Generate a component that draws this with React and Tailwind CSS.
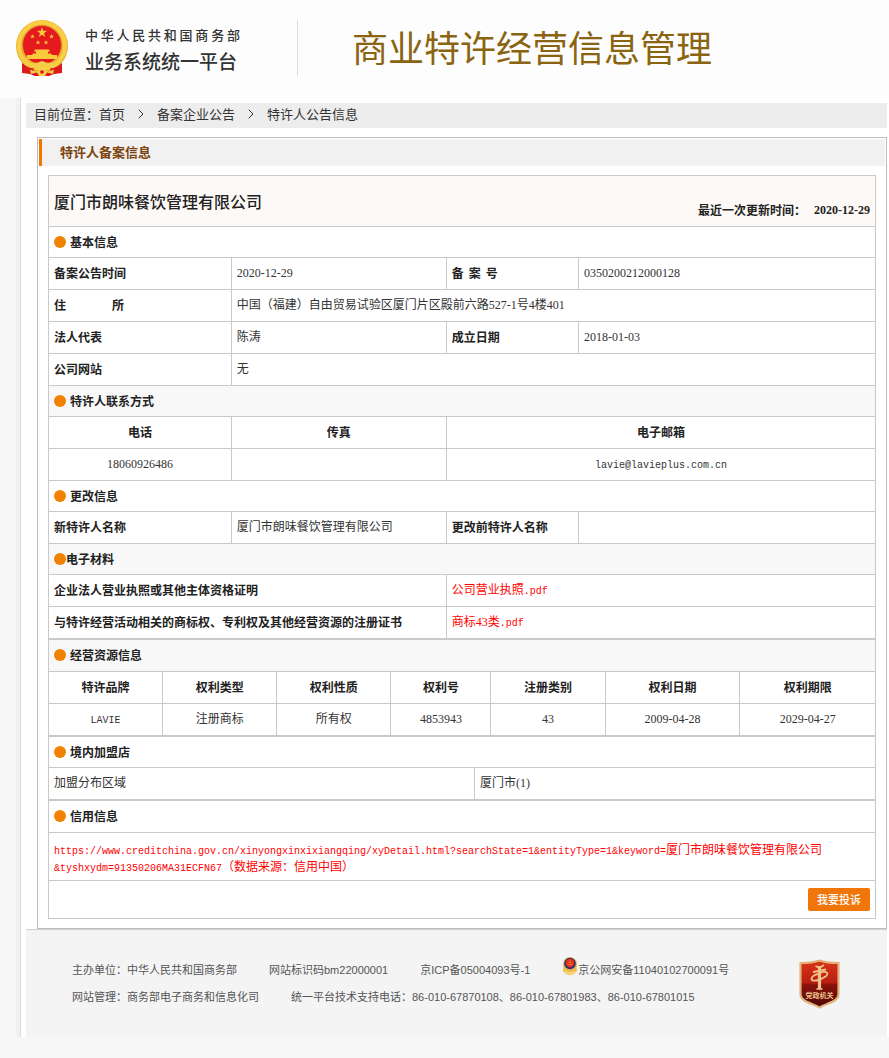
import React from "react";
import { ChevronRight } from "lucide-react";

const MONO = "font-['Liberation_Mono','Noto_Sans_CJK_SC',monospace] text-[10px] leading-none";
const CELL = "border border-[#c9c9c9] px-[5px] h-8 pt-0 pb-px";
const LABEL = CELL + " text-left font-bold text-[#222]";
const CENTER_LABEL = CELL + " text-center font-bold text-[#222]";
const VALUE =
  CELL + " text-[#333] font-['Liberation_Serif','Noto_Sans_CJK_SC',serif]";
const TABLE = "w-full table-fixed border-collapse text-[12px] leading-4";

function Emblem() {
  return (
    <svg viewBox="0 0 52 56" className="h-14 w-[52px] shrink-0" aria-hidden="true">
      <path d="M7 38 L6 53 L14 54 L19 56 L33 56 L38 54 L46 53 L45 38 Z" fill="#d8141c" />
      <circle cx="26" cy="26" r="26" fill="#eeb035" />
      <circle cx="26" cy="25.5" r="23" fill="none" stroke="#f7cf45" strokeWidth="4" />
      <circle cx="26" cy="25" r="19.500" fill="#e5191e" stroke="#d99a22" strokeWidth="0.800" />
      <g fill="#f8c93a">
        <path d="M26 7 L27.2 10.8 L31.2 10.8 L28 13.200 L29.200 17 L26 14.700 L22.800 17 L24 13.200 L20.800 10.800 L24.800 10.800 Z" />
        <path d="M16.500 14 l.6 1.700 h1.800 l-1.400 1.100 .5 1.700 -1.500 -1 -1.500 1 .5 -1.700 -1.400 -1.100 h1.800 Z" />
        <path d="M35.500 14 l.6 1.700 h1.800 l-1.400 1.100 .5 1.700 -1.500 -1 -1.500 1 .5 -1.700 -1.400 -1.100 h1.800 Z" />
        <path d="M22 20 l.6 1.700 h1.800 l-1.400 1.100 .5 1.700 -1.500 -1 -1.500 1 .5 -1.700 -1.400 -1.100 h1.800 Z" />
        <path d="M30 20 l.6 1.700 h1.800 l-1.400 1.100 .5 1.700 -1.500 -1 -1.500 1 .5 -1.700 -1.400 -1.100 h1.800 Z" />
        <path d="M19 29.500 H33 L34 31.500 H32 V33.500 H35 L36 35 H41 V39 H11 V35 H16 L17 33.500 H20 V31.500 H18 Z" />
      </g>
      <path d="M7 39 Q16 46 26 41 Q36 46 45 39 L43 44 Q34 50 26 46 Q18 50 9 44 Z" fill="#f6cd45" />
      <path d="M6 43 Q12 49 18 48 L16 53 L6 53 Z M46 43 Q40 49 34 48 L36 53 L46 53 Z" fill="#dd1a1c" />
      <path d="M14 49.500 Q20 53 26 49 Q32 53 38 49.500 L37 54 L31 52.500 L29 56 H23 L21 52.500 L15 54 Z" fill="#f6cd45" />
      <circle cx="26" cy="52" r="1.800" fill="#d8141c" />
    </svg>
  );
}

function PoliceBadge() {
  return (
    <svg viewBox="0 0 16 18" className="h-[18px] w-4 shrink-0" aria-hidden="true">
      <path d="M1.500 9 L1 14 Q4 18 8 18 Q12 18 15 14 L14.500 9 Z" fill="#f0bd4c" />
      <path d="M3 14.500 Q8 18 13 14.500" fill="none" stroke="#fbe08c" strokeWidth="1.500" />
      <circle cx="8" cy="7" r="7" fill="#e9b450" />
      <circle cx="8" cy="6.500" r="5.800" fill="#2f2f6e" />
      <circle cx="8" cy="6" r="4.200" fill="#e8301c" />
      <path d="M5.500 7.500 H10.500 M6.500 5.500 H9.500 M8 3 V4.500" stroke="#f07c30" strokeWidth="0.900" />
    </svg>
  );
}

function ShieldBadge() {
  return (
    <svg viewBox="0 0 41 50" className="h-[50px] w-[41px] shrink-0" role="img" aria-label="党政机关">
      <defs>
        <linearGradient id="shield" x1="0" y1="0" x2="0" y2="1">
          <stop offset="0" stopColor="#d93419" />
          <stop offset="0.480" stopColor="#b81e12" />
          <stop offset="0.500" stopColor="#8e130d" />
          <stop offset="1" stopColor="#4a0806" />
        </linearGradient>
      </defs>
      <path
        d="M20.500 1.500 C15 3.500 8 4 1.500 4 V35 C1.500 43 13 44 20.500 48.500 C28 44 39.500 43 39.500 35 V4 C33 4 26 3.500 20.500 1.500 Z"
        fill="url(#shield)"
        stroke="#e2b27c"
        strokeWidth="2.200"
      />
      <g fill="none" stroke="#efc48c">
        <path d="M20.500 7 V30" strokeWidth="3.200" />
        <path d="M16.500 7 L20.500 9 L25 6" strokeWidth="1.600" />
        <path d="M14 13 L27 10.500" strokeWidth="1.800" />
        <path d="M21 14 C27 11.500 31 14 26.500 17.500 C21 21.500 12 23.500 12.500 19.500 C12.700 17.500 16 15.500 19 15" strokeWidth="1.800" />
        <path d="M17.500 30 H23.500" strokeWidth="1.600" />
      </g>
      <text
        x="20.500"
        y="39"
        textAnchor="middle"
        fontSize="7"
        fontWeight="700"
        fill="#efc48c"
        fontFamily="'Noto Sans CJK SC', sans-serif"
      >
        党政机关
      </text>
    </svg>
  );
}

function Section({ title, span = 1, shaded = false, tight = false, height = "h-[31px]" }) {
  return (
    <tr className={shaded ? "bg-[#f8f8f8]" : "bg-white"}>
      <th
        colSpan={span}
        className={height + " border border-[#c9c9c9] px-[5px] pb-px pt-0 text-left font-bold text-[#222]"}
      >
        <span className={tight ? "flex items-center" : "flex items-center gap-1"}>
          <span className="size-3 rounded-full bg-[#f08200]" />
          <span>{title}</span>
        </span>
      </th>
    </tr>
  );
}

function Spread({ text }) {
  return (
    <span className="flex justify-between">
      {[...text].map((c, i) => (
        <span key={i}>{c}</span>
      ))}
    </span>
  );
}

function Header() {
  return (
    <header className="flex h-[98px] items-center bg-[#fdfdfd] pb-[2px] pl-4">
      <Emblem />
      <div className="ml-[17px] w-[155px] shrink-0 pt-1 text-[#333]">
        <div className="text-[13px] font-medium leading-5">
          <Spread text="中华人民共和国商务部" />
        </div>
        <div className="mt-[2px] whitespace-nowrap text-[19px] font-medium leading-7">业务系统统一平台</div>
      </div>
      <div className="ml-[57px] h-14 w-px shrink-0 bg-[#dcdcdc]" />
      <h1 className="ml-[54px] whitespace-nowrap pb-1 text-[36px] leading-[44px] text-[#8a6410]">商业特许经营信息管理</h1>
    </header>
  );
}

function Breadcrumb() {
  return (
    <nav className="flex h-[25px] items-center gap-2 bg-[#ededed] pb-[3px] pl-2 text-[13px] text-[#333]">
      <span>
        目前位置：<a href="#home">首页</a>
      </span>
      <ChevronRight size={16} strokeWidth={1.5} />
      <a href="#notices">备案企业公告</a>
      <ChevronRight size={16} strokeWidth={1.5} />
      <a href="#detail">特许人公告信息</a>
    </nav>
  );
}

function MainTable() {
  return (
    <table className={TABLE}>
      <colgroup>
        <col className="w-[22.1%]" />
        <col className="w-[26%]" />
        <col className="w-[16%]" />
        <col />
      </colgroup>
      <tbody>
        <tr className="bg-[#fdf9f6]">
          <td colSpan={4} className="h-[51px] border border-[#c9c9c9] px-[5px] pb-px pt-0">
            <div className="flex items-center justify-between">
              <h3 className="text-[16px] font-medium leading-6 text-[#222]">厦门市朗味餐饮管理有限公司</h3>
              <div className="flex gap-2 pt-[18px] font-bold text-[#222]">
                <span>最近一次更新时间：</span>
                <span className="font-['Liberation_Serif',serif]">2020-12-29</span>
              </div>
            </div>
          </td>
        </tr>
        <Section title="基本信息" span={4} />
        <tr>
          <th className={LABEL}>备案公告时间</th>
          <td className={VALUE}>2020-12-29</td>
          <th className={LABEL}>
            <span className="flex gap-[5px]">
              <span>备</span>
              <span>案</span>
              <span>号</span>
            </span>
          </th>
          <td className={VALUE}>0350200212000128</td>
        </tr>
        <tr>
          <th className={LABEL}>
            <span className="flex w-[70px] justify-between">
              <span>住</span>
              <span>所</span>
            </span>
          </th>
          <td colSpan={3} className={VALUE}>
            中国（福建）自由贸易试验区厦门片区殿前六路527-1号4楼401
          </td>
        </tr>
        <tr>
          <th className={LABEL}>法人代表</th>
          <td className={VALUE}>陈涛</td>
          <th className={LABEL}>成立日期</th>
          <td className={VALUE}>2018-01-03</td>
        </tr>
        <tr>
          <th className={LABEL}>公司网站</th>
          <td colSpan={3} className={VALUE}>无</td>
        </tr>
        <Section title="特许人联系方式" span={4} shaded />
        <tr>
          <th className={CENTER_LABEL}>电话</th>
          <th className={CENTER_LABEL}>传真</th>
          <th colSpan={2} className={CENTER_LABEL}>电子邮箱</th>
        </tr>
        <tr>
          <td className={VALUE + " text-center"}>18060926486</td>
          <td className={VALUE} />
          <td colSpan={2} className={VALUE + " text-center"}>
            <span className={MONO}>lavie@lavieplus.com.cn</span>
          </td>
        </tr>
        <Section title="更改信息" span={4} />
        <tr>
          <th className={LABEL}>新特许人名称</th>
          <td className={VALUE}>厦门市朗味餐饮管理有限公司</td>
          <th className={LABEL}>更改前特许人名称</th>
          <td className={VALUE} />
        </tr>
        <Section title="电子材料" span={4} shaded tight />
        <tr>
          <th colSpan={2} className={LABEL}>企业法人营业执照或其他主体资格证明</th>
          <td colSpan={2} className={VALUE}>
            <a href="#license" className="text-[#ff0000]">
              公司营业执照<span className={MONO}>.pdf</span>
            </a>
          </td>
        </tr>
        <tr>
          <th colSpan={2} className={LABEL}>与特许经营活动相关的商标权、专利权及其他经营资源的注册证书</th>
          <td colSpan={2} className={VALUE}>
            <a href="#trademark" className="text-[#ff0000]">
              商标43类<span className={MONO}>.pdf</span>
            </a>
          </td>
        </tr>
      </tbody>
    </table>
  );
}

function RightsTable() {
  return (
    <table className={TABLE}>
      <colgroup>
        <col className="w-[13.8%]" />
        <col className="w-[13.8%]" />
        <col className="w-[13.8%]" />
        <col className="w-[12.1%]" />
        <col className="w-[13.8%]" />
        <col className="w-[16.3%]" />
        <col />
      </colgroup>
      <tbody>
        <Section title="经营资源信息" span={7} shaded height="h-8" />
        <tr>
          {["特许品牌", "权利类型", "权利性质", "权利号", "注册类别", "权利日期", "权利期限"].map((t) => (
            <th key={t} className={CENTER_LABEL}>{t}</th>
          ))}
        </tr>
        <tr>
          <td className={VALUE + " text-center"}>
            <span className={MONO}>LAVIE</span>
          </td>
          {["注册商标", "所有权", "4853943", "43", "2009-04-28", "2029-04-27"].map((t) => (
            <td key={t} className={VALUE + " text-center"}>{t}</td>
          ))}
        </tr>
      </tbody>
    </table>
  );
}

function StoresTable() {
  return (
    <table className={TABLE}>
      <colgroup>
        <col className="w-[51.5%]" />
        <col />
      </colgroup>
      <tbody>
        <Section title="境内加盟店" span={2} />
        <tr>
          <td className={VALUE}>加盟分布区域</td>
          <td className={VALUE}>厦门市(1)</td>
        </tr>
      </tbody>
    </table>
  );
}

function CreditTable() {
  return (
    <table className={TABLE}>
      <tbody>
        <Section title="信用信息" height="h-8" />
        <tr>
          <td className="h-12 border border-[#c9c9c9] px-[5px] py-0 leading-[17px]">
            <a href="#credit" className="text-[#ff0000]">
              <span className={MONO}>
                https://www.creditchina.gov.cn/xinyongxinxixiangqing/xyDetail.html?searchState=1&amp;entityType=1&amp;keyword=
              </span>
              厦门市朗味餐饮管理有限公司
              <br />
              <span className={MONO}>&amp;tyshxydm=91350206MA31ECFN67</span>（数据来源：信用中国）
            </a>
          </td>
        </tr>
        <tr>
          <td className="h-[38px] border border-[#c9c9c9] px-[5px] py-0">
            <div className="flex justify-end">
              <button type="button" className="h-[23px] rounded-xs bg-[#f0760a] px-[9px] pb-px text-[11px] font-medium leading-4 text-white">
                我要投诉
              </button>
            </div>
          </td>
        </tr>
      </tbody>
    </table>
  );
}

function Footer() {
  return (
    <footer className="flex h-[108px] items-start justify-between border-t border-[#cfcfcf] bg-[#f4f4f4] pl-[46px] pr-[47px] pt-[29px] font-['Liberation_Sans','Noto_Sans_CJK_SC',sans-serif] text-[11px] leading-[27px] text-[#555]">
      <div className="-mt-[2px] whitespace-nowrap">
        <div className="flex gap-8">
          <span>主办单位：中华人民共和国商务部</span>
          <span>网站标识码bm22000001</span>
          <a href="#icp">京ICP备05004093号-1</a>
          <a href="#police" className="flex items-start">
            <PoliceBadge />
            京公网安备11040102700091号
          </a>
        </div>
        <div className="flex gap-8">
          <span>网站管理：商务部电子商务和信息化司</span>
          <span>统一平台技术支持电话：86-010-67870108、86-010-67801983、86-010-67801015</span>
        </div>
      </div>
      <ShieldBadge />
    </footer>
  );
}

export default function App() {
  return (
    <div className="min-h-screen bg-[#f7f7f7] pb-5 font-['Noto_Sans_CJK_SC',sans-serif]">
      <Header />
      <div className="ml-4 border-l-4 border-[#f1f1f1]">
        <div className="border-l border-[#dcdcdc] bg-white pl-[5px] pr-[2px] pt-[5px]">
          <Breadcrumb />
          <main className="ml-[11px] mt-[9px] border border-[#bdbdbd] p-px">
            <h2 className="h-[27px] border-l-[3px] border-[#f07800] bg-[#f1f1f1] pl-[18px] text-[13px] font-bold leading-[25px] text-[#7c4510]">
              特许人备案信息
            </h2>
            <div className="px-[9px] pb-2 pt-[9px]">
              <MainTable />
              <RightsTable />
              <StoresTable />
              <CreditTable />
            </div>
          </main>
          <Footer />
        </div>
      </div>
    </div>
  );
}
